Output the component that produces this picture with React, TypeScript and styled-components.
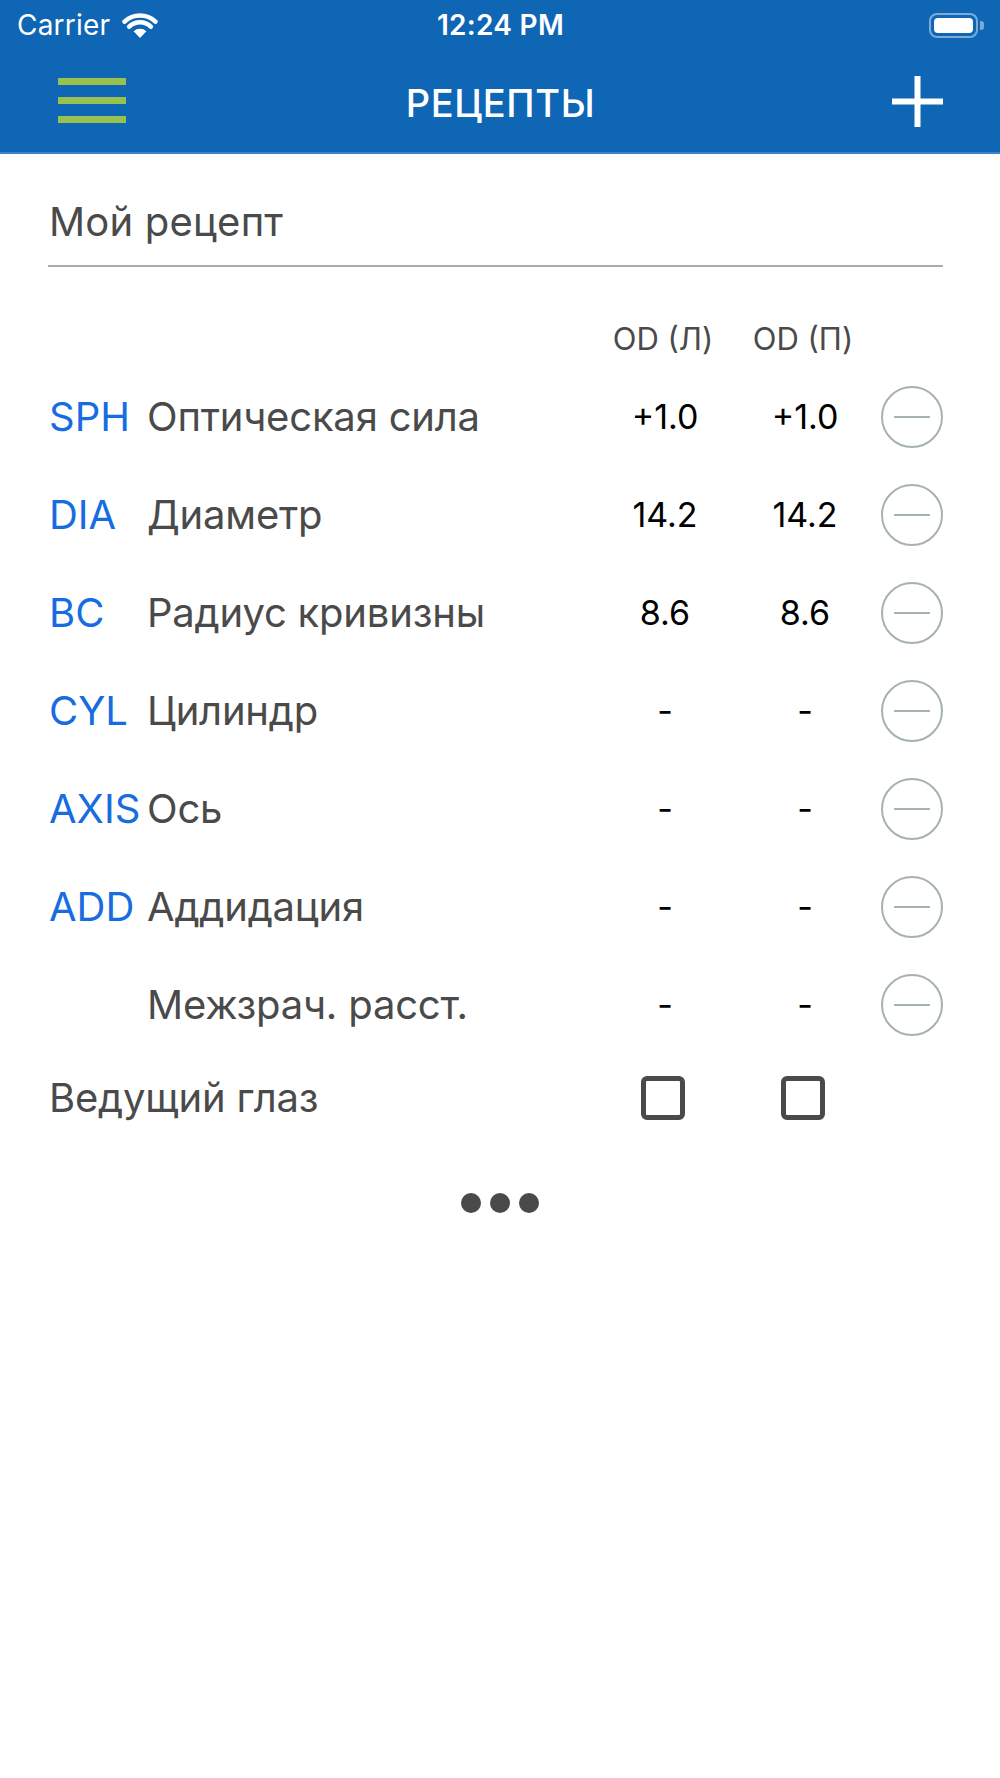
import React from "react";
import styled, { createGlobalStyle } from "styled-components";

const GlobalStyle = createGlobalStyle`
  html, body { margin: 0; padding: 0; background: #ffffff; }
  body { font-family: Inter, "Noto Sans", "Liberation Sans", sans-serif; }
  * { box-sizing: border-box; }
`;

const Page = styled.div`
  width: 1000px;
  min-height: 1778px;
  background: #ffffff;
`;

const Header = styled.header`
  background: #0e66b5;
  border-bottom: 2px solid #3a84c8;
  height: 154px;
  color: #ffffff;
`;

const StatusBar = styled.div`
  height: 50px;
  display: grid;
  grid-template-columns: 1fr auto 1fr;
  align-items: center;
  padding: 0 16px 0 17px;
  font-size: 28px;
  line-height: 34px;
`;

const Carrier = styled.div`
  display: flex;
  align-items: center;
  gap: 12px;
  letter-spacing: 0.2px;
`;

const Time = styled.div`
  font-weight: 600;
  letter-spacing: 0.3px;
`;

const Battery = styled.div`
  justify-self: end;
  display: flex;
  align-items: center;
  gap: 2px;
`;

const BatteryBody = styled.div`
  width: 49px;
  height: 25px;
  border: 2px solid rgba(255, 255, 255, 0.45);
  border-radius: 8px;
  padding: 3px;
`;

const BatteryFill = styled.div`
  width: 100%;
  height: 100%;
  background: #ffffff;
  border-radius: 4px;
`;

const BatteryTip = styled.div`
  width: 4px;
  height: 9px;
  background: rgba(255, 255, 255, 0.45);
  border-radius: 0 3px 3px 0;
`;

const NavBar = styled.div`
  height: 102px;
  display: grid;
  grid-template-columns: 1fr auto 1fr;
  align-items: center;
  padding: 0 57px 0 58px;
`;

const MenuButton = styled.div`
  display: flex;
  flex-direction: column;
  gap: 12px;
  width: 68px;
  margin-top: -2px;
`;

const MenuBar = styled.span`
  display: block;
  height: 7px;
  background: #97c24f;
`;

const Title = styled.h1`
  margin: 4px 0 0;
  font-size: 38px;
  line-height: 46px;
  font-weight: 500;
  letter-spacing: 0.6px;
  color: #ffffff;
`;

const AddButton = styled.div`
  justify-self: end;
  width: 51px;
  height: 51px;
  display: flex;
`;

const Content = styled.main`
  padding: 0 57px 0 48px;
`;

const NameField = styled.div`
  margin-top: 44px;
  font-size: 40px;
  line-height: 48px;
  color: #4a4a4a;
  padding-bottom: 19px;
  border-bottom: 2px solid #ababab;
  padding-left: 1px;
  letter-spacing: 0.2px;
`;

const Table = styled.div`
  margin-top: 43px;
`;

const HeadRow = styled.div`
  display: grid;
  grid-template-columns: 99px 1fr 140px 140px 6px 62px;
  height: 58px;
  align-items: center;
`;

const ColHead = styled.div<{ $col: number }>`
  grid-column: ${(p) => p.$col};
  text-align: center;
  font-size: 31px;
  line-height: 38px;
  color: #4a4a4a;
  padding-right: 4px;
`;

const Row = styled.div<{ $height?: number }>`
  display: grid;
  grid-template-columns: 99px 1fr 140px 140px 6px 62px;
  height: ${(p) => p.$height ?? 98}px;
  align-items: center;
`;

const Code = styled.div`
  font-size: 40px;
  line-height: 48px;
  color: #166ce0;
  white-space: nowrap;
  padding-left: 1px;
`;

const Desc = styled.div<{ $wide?: boolean }>`
  grid-column: ${(p) => (p.$wide ? "1 / 3" : "2")};
  font-size: 40px;
  line-height: 48px;
  color: #4a4a4a;
  white-space: nowrap;
  letter-spacing: -0.2px;
  padding-left: ${(p) => (p.$wide ? "1px" : "0")};
`;

const Value = styled.div`
  text-align: center;
  font-size: 34px;
  line-height: 40px;
  color: #000000;
`;

const MinusButton = styled.div`
  grid-column: 6;
  width: 62px;
  height: 62px;
  border-radius: 50%;
  border: 2px solid #a6b2af;
  display: flex;
  align-items: center;
  justify-content: center;
`;

const MinusLine = styled.span`
  width: 36px;
  height: 2px;
  background: #a6b2af;
`;

const CheckCell = styled.div`
  display: flex;
  justify-content: center;
`;

const Checkbox = styled.div`
  width: 44px;
  height: 44px;
  border: 5px solid #4a4a4a;
  border-radius: 6px;
  margin-left: -4px;
`;

const More = styled.div`
  margin-top: 51px;
  display: flex;
  justify-content: center;
  gap: 9px;
  padding-left: 8px;
`;

const Dot = styled.span`
  width: 20px;
  height: 20px;
  border-radius: 50%;
  background: #4a4a4a;
`;

const WifiIcon = () => (
  <svg width="36" height="27" viewBox="0 0 36 27" aria-hidden>
    <path d="M18 26 L11.6 19.2 A9.5 9.5 0 0 1 24.4 19.2 Z" fill="#fff" />
    <path
      d="M7.2 14.6 A15.5 15.5 0 0 1 28.8 14.6"
      stroke="#fff"
      strokeWidth="4.6"
      fill="none"
      strokeLinecap="round"
    />
    <path
      d="M2.6 9.6 A22.5 22.5 0 0 1 33.4 9.6"
      stroke="#fff"
      strokeWidth="4.6"
      fill="none"
      strokeLinecap="round"
    />
  </svg>
);

const PlusIcon = () => (
  <svg width="51" height="51" viewBox="0 0 51 51" aria-hidden>
    <rect x="22.5" y="0" width="6" height="51" fill="#fff" />
    <rect x="0" y="22.5" width="51" height="6" fill="#fff" />
  </svg>
);

type Param = { code: string; name: string; left: string; right: string };

const params: Param[] = [
  { code: "SPH", name: "Оптическая сила", left: "+1.0", right: "+1.0" },
  { code: "DIA", name: "Диаметр", left: "14.2", right: "14.2" },
  { code: "BC", name: "Радиус кривизны", left: "8.6", right: "8.6" },
  { code: "CYL", name: "Цилиндр", left: "-", right: "-" },
  { code: "AXIS", name: "Ось", left: "-", right: "-" },
  { code: "ADD", name: "Аддидация", left: "-", right: "-" },
  { code: "", name: "Межзрач. расст.", left: "-", right: "-" },
];

export default function App() {
  return (
    <Page>
      <GlobalStyle />
      <Header>
        <StatusBar>
          <Carrier>
            Carrier
            <WifiIcon />
          </Carrier>
          <Time>12:24 PM</Time>
          <Battery>
            <BatteryBody>
              <BatteryFill />
            </BatteryBody>
            <BatteryTip />
          </Battery>
        </StatusBar>
        <NavBar>
          <MenuButton>
            <MenuBar />
            <MenuBar />
            <MenuBar />
          </MenuButton>
          <Title>РЕЦЕПТЫ</Title>
          <AddButton>
            <PlusIcon />
          </AddButton>
        </NavBar>
      </Header>
      <Content>
        <NameField>Мой рецепт</NameField>
        <Table>
          <HeadRow>
            <ColHead $col={3}>OD (Л)</ColHead>
            <ColHead $col={4}>OD (П)</ColHead>
          </HeadRow>
          {params.map((p) => (
            <Row key={p.name}>
              <Code>{p.code}</Code>
              <Desc>{p.name}</Desc>
              <Value>{p.left}</Value>
              <Value>{p.right}</Value>
              <MinusButton>
                <MinusLine />
              </MinusButton>
            </Row>
          ))}
          <Row $height={88}>
            <Desc $wide>Ведущий глаз</Desc>
            <CheckCell>
              <Checkbox />
            </CheckCell>
            <CheckCell>
              <Checkbox />
            </CheckCell>
          </Row>
        </Table>
        <More>
          <Dot />
          <Dot />
          <Dot />
        </More>
      </Content>
    </Page>
  );
}
